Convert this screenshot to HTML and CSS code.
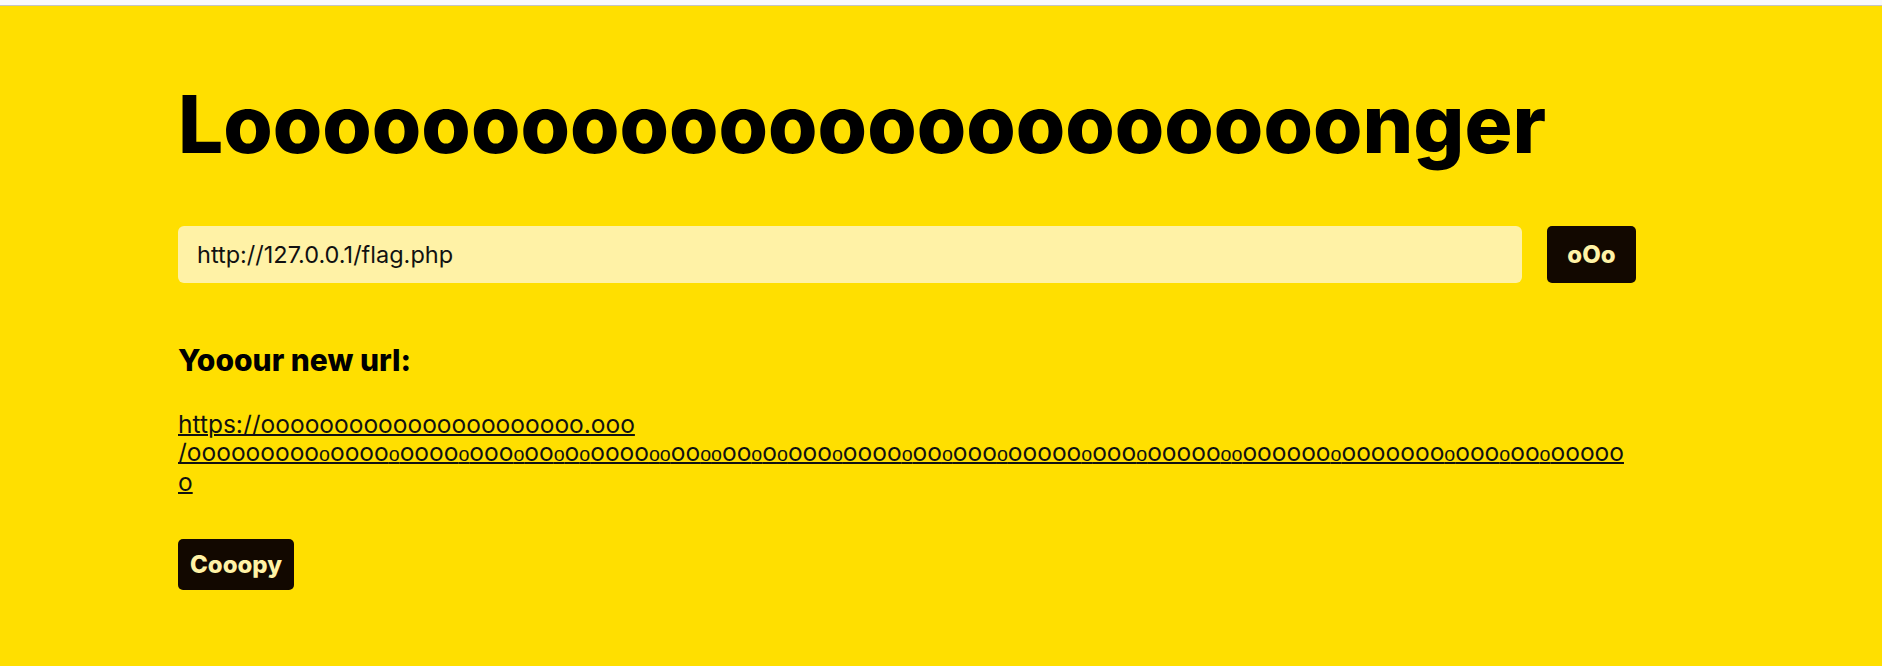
FILE: index.html
```html
<!DOCTYPE html>
<html lang="en">
<head>
<meta charset="utf-8">
<title>Looooonger</title>
<link rel="stylesheet" href="styles.css">
</head>
<body>
<div class="chrome"></div>
<main class="page">
  <h1 class="title">Looooooooooooooooooooooonger</h1>
  <form class="form">
    <input class="url-input" type="text" value="http://127.0.0.1/flag.php">
    <button class="btn btn-go" type="button">oOo</button>
  </form>
  <section class="result">
    <h2 class="result-title">Yooour new url:</h2>
    <p class="result-url"><a class="link" href="#">https://oooooooooooooooooooooo.ooo<wbr>/ooooooooo<span class="s">o</span>oooo<span class="s">o</span>oooo<span class="s">o</span>ooo<span class="s">o</span>oo<span class="s">o</span>o<span class="s">o</span>oooo<span class="s">o</span><span class="s">o</span>oo<span class="s">o</span><span class="s">o</span>oo<span class="s">o</span>o<span class="s">o</span>ooo<span class="s">o</span>oooo<span class="s">o</span>oo<span class="s">o</span>ooo<span class="s">o</span>ooooo<span class="s">o</span>ooo<span class="s">o</span>ooooo<span class="s">o</span><span class="s">o</span>oooooo<span class="s">o</span>ooooooo<span class="s">o</span>ooo<span class="s">o</span>oo<span class="s">o</span>oooooo</a></p>
  </section>
  <button class="btn btn-copy" type="button">Cooopy</button>
</main>
</body>
</html>
```

FILE: styles.css
```css
html, body {
  margin: 0;
  padding: 0;
}
body {
  background: #ffdf00;
  font-family: Inter, "Noto Sans", sans-serif;
  color: #000;
  min-height: 666px;
}
.chrome {
  height: 5px;
  background: #f9f9fb;
  border-bottom: 1px solid #c4c4c4;
}
.page {
  padding: 0 246px 0 178px;
  display: flex;
  flex-direction: column;
  align-items: flex-start;
}
.title {
  margin: 70px 0 0;
  font-size: 80px;
  font-weight: 800;
  line-height: 1.2;
}
.form {
  margin-top: 54px;
  width: 100%;
  display: flex;
  gap: 25px;
}
.url-input {
  flex: 1;
  height: 57px;
  box-sizing: border-box;
  border: none;
  border-radius: 6px;
  background: #fff2a6;
  padding: 0 19px;
  font-family: Inter, sans-serif;
  font-size: 23.5px;
  color: #111;
  outline: none;
}
.btn {
  border: none;
  border-radius: 5px;
  background: #120800;
  color: #fff2a6;
  font-family: Inter, sans-serif;
  font-weight: 800;
  font-size: 24px;
  cursor: pointer;
}
.btn-go {
  width: 89px;
  height: 57px;
}
.result {
  margin-top: 58px;
  width: 100%;
}
.result-title {
  margin: 0;
  font-size: 30px;
  font-weight: 800;
  line-height: 1.3;
}
.result-url {
  margin: 30px 0 0;
  font-size: 24.5px;
  line-height: 28px;
  overflow-wrap: anywhere;
}
.link {
  color: #111;
  text-decoration: underline;
  text-decoration-thickness: 2px;
}
.s {
  font-family: "Liberation Sans", sans-serif;
  font-size: 0.8em;
}
.btn-copy {
  margin-top: 43px;
  width: 116px;
  height: 51px;
}
```
